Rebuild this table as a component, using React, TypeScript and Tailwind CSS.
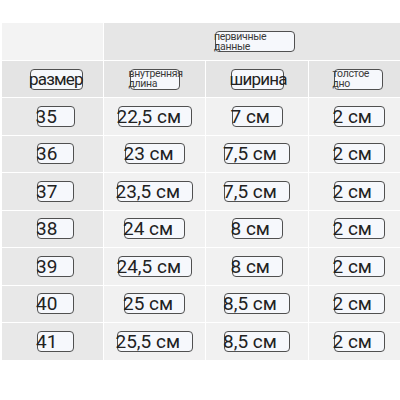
const font = { fontFamily: "Roboto, 'Liberation Sans', sans-serif" };

type Cell = { t: string; w: number };

const rows: Cell[][] = [
  [{ t: "35", w: 38 }, { t: "22,5 см", w: 74 }, { t: "7 см", w: 51 }, { t: "2 см", w: 51 }],
  [{ t: "36", w: 37 }, { t: "23 см", w: 60 }, { t: "7,5 см", w: 66 }, { t: "2 см", w: 51 }],
  [{ t: "37", w: 37 }, { t: "23,5 см", w: 76 }, { t: "7,5 см", w: 66 }, { t: "2 см", w: 51 }],
  [{ t: "38", w: 37 }, { t: "24 см", w: 61 }, { t: "8 см", w: 51 }, { t: "2 см", w: 51 }],
  [{ t: "39", w: 37 }, { t: "24,5 см", w: 74 }, { t: "8 см", w: 51 }, { t: "2 см", w: 51 }],
  [{ t: "40", w: 37 }, { t: "25 см", w: 61 }, { t: "8,5 см", w: 66 }, { t: "2 см", w: 51 }],
  [{ t: "41", w: 37 }, { t: "25,5 см", w: 76 }, { t: "8,5 см", w: 66 }, { t: "2 см", w: 51 }],
];

const shift = ["pl-[6px]", "", "", "pl-[9px]"];

function Box({ w, children, small, narrow }: { w: number; children: React.ReactNode; small?: boolean; narrow?: boolean }) {
  return (
    <div
      className="h-[21px] rounded-[4px] border-[1.5px] border-[#505050] bg-[#f6f8fc] flex items-center"
      style={{ width: w }}
    >
      {small ? (
        <div className="-ml-[2px] text-[10.5px] leading-[10px] tracking-[-0.3px] text-[#3a3a3a] whitespace-pre">{children}</div>
      ) : (
        <div
          className={
            "-ml-[2px] leading-[19px] text-[#222] whitespace-nowrap " +
            (narrow ? "text-[17px] tracking-[-0.8px]" : "text-[19px]")
          }
        >
          {children}
        </div>
      )}
    </div>
  );
}

export default function App() {
  return (
    <div className="w-[400px] h-[400px] bg-white pt-[23px] pl-[2px]" style={font}>
      <div className="grid grid-cols-[101px_101px_102px_91px] gap-px bg-white">
        <div className="h-[37px] bg-[#f3f3f3]" />
        <div className="col-span-3 h-[37px] bg-[#e6e6e6] flex items-center justify-center pl-[6px]">
          <Box w={80} small>{"первичные\nданные"}</Box>
        </div>

        <div className="h-[36px] bg-[#e4e4e4] flex items-center justify-center pl-[8px]">
          <Box w={53} narrow>размер</Box>
        </div>
        <div className="h-[36px] bg-[#e4e4e4] flex items-center justify-center">
          <Box w={50} small>{"внутренняя\nдлина"}</Box>
        </div>
        <div className="h-[36px] bg-[#e4e4e4] flex items-center justify-center">
          <Box w={53} narrow>ширина</Box>
        </div>
        <div className="h-[36px] bg-[#e4e4e4] flex items-center justify-center pl-[7px]">
          <Box w={49} small>{"толстое\nдно"}</Box>
        </div>

        {rows.map((r, i) =>
          r.map((c, j) => (
            <div
              key={i + "-" + j}
              className={
                "h-[36.5px] flex items-center justify-center " +
                (j === 0 ? "bg-[#e8e8e8] " : "bg-[#f1f1f1] ") +
                shift[j]
              }
            >
              <Box w={c.w}>{c.t}</Box>
            </div>
          ))
        )}
      </div>
    </div>
  );
}
